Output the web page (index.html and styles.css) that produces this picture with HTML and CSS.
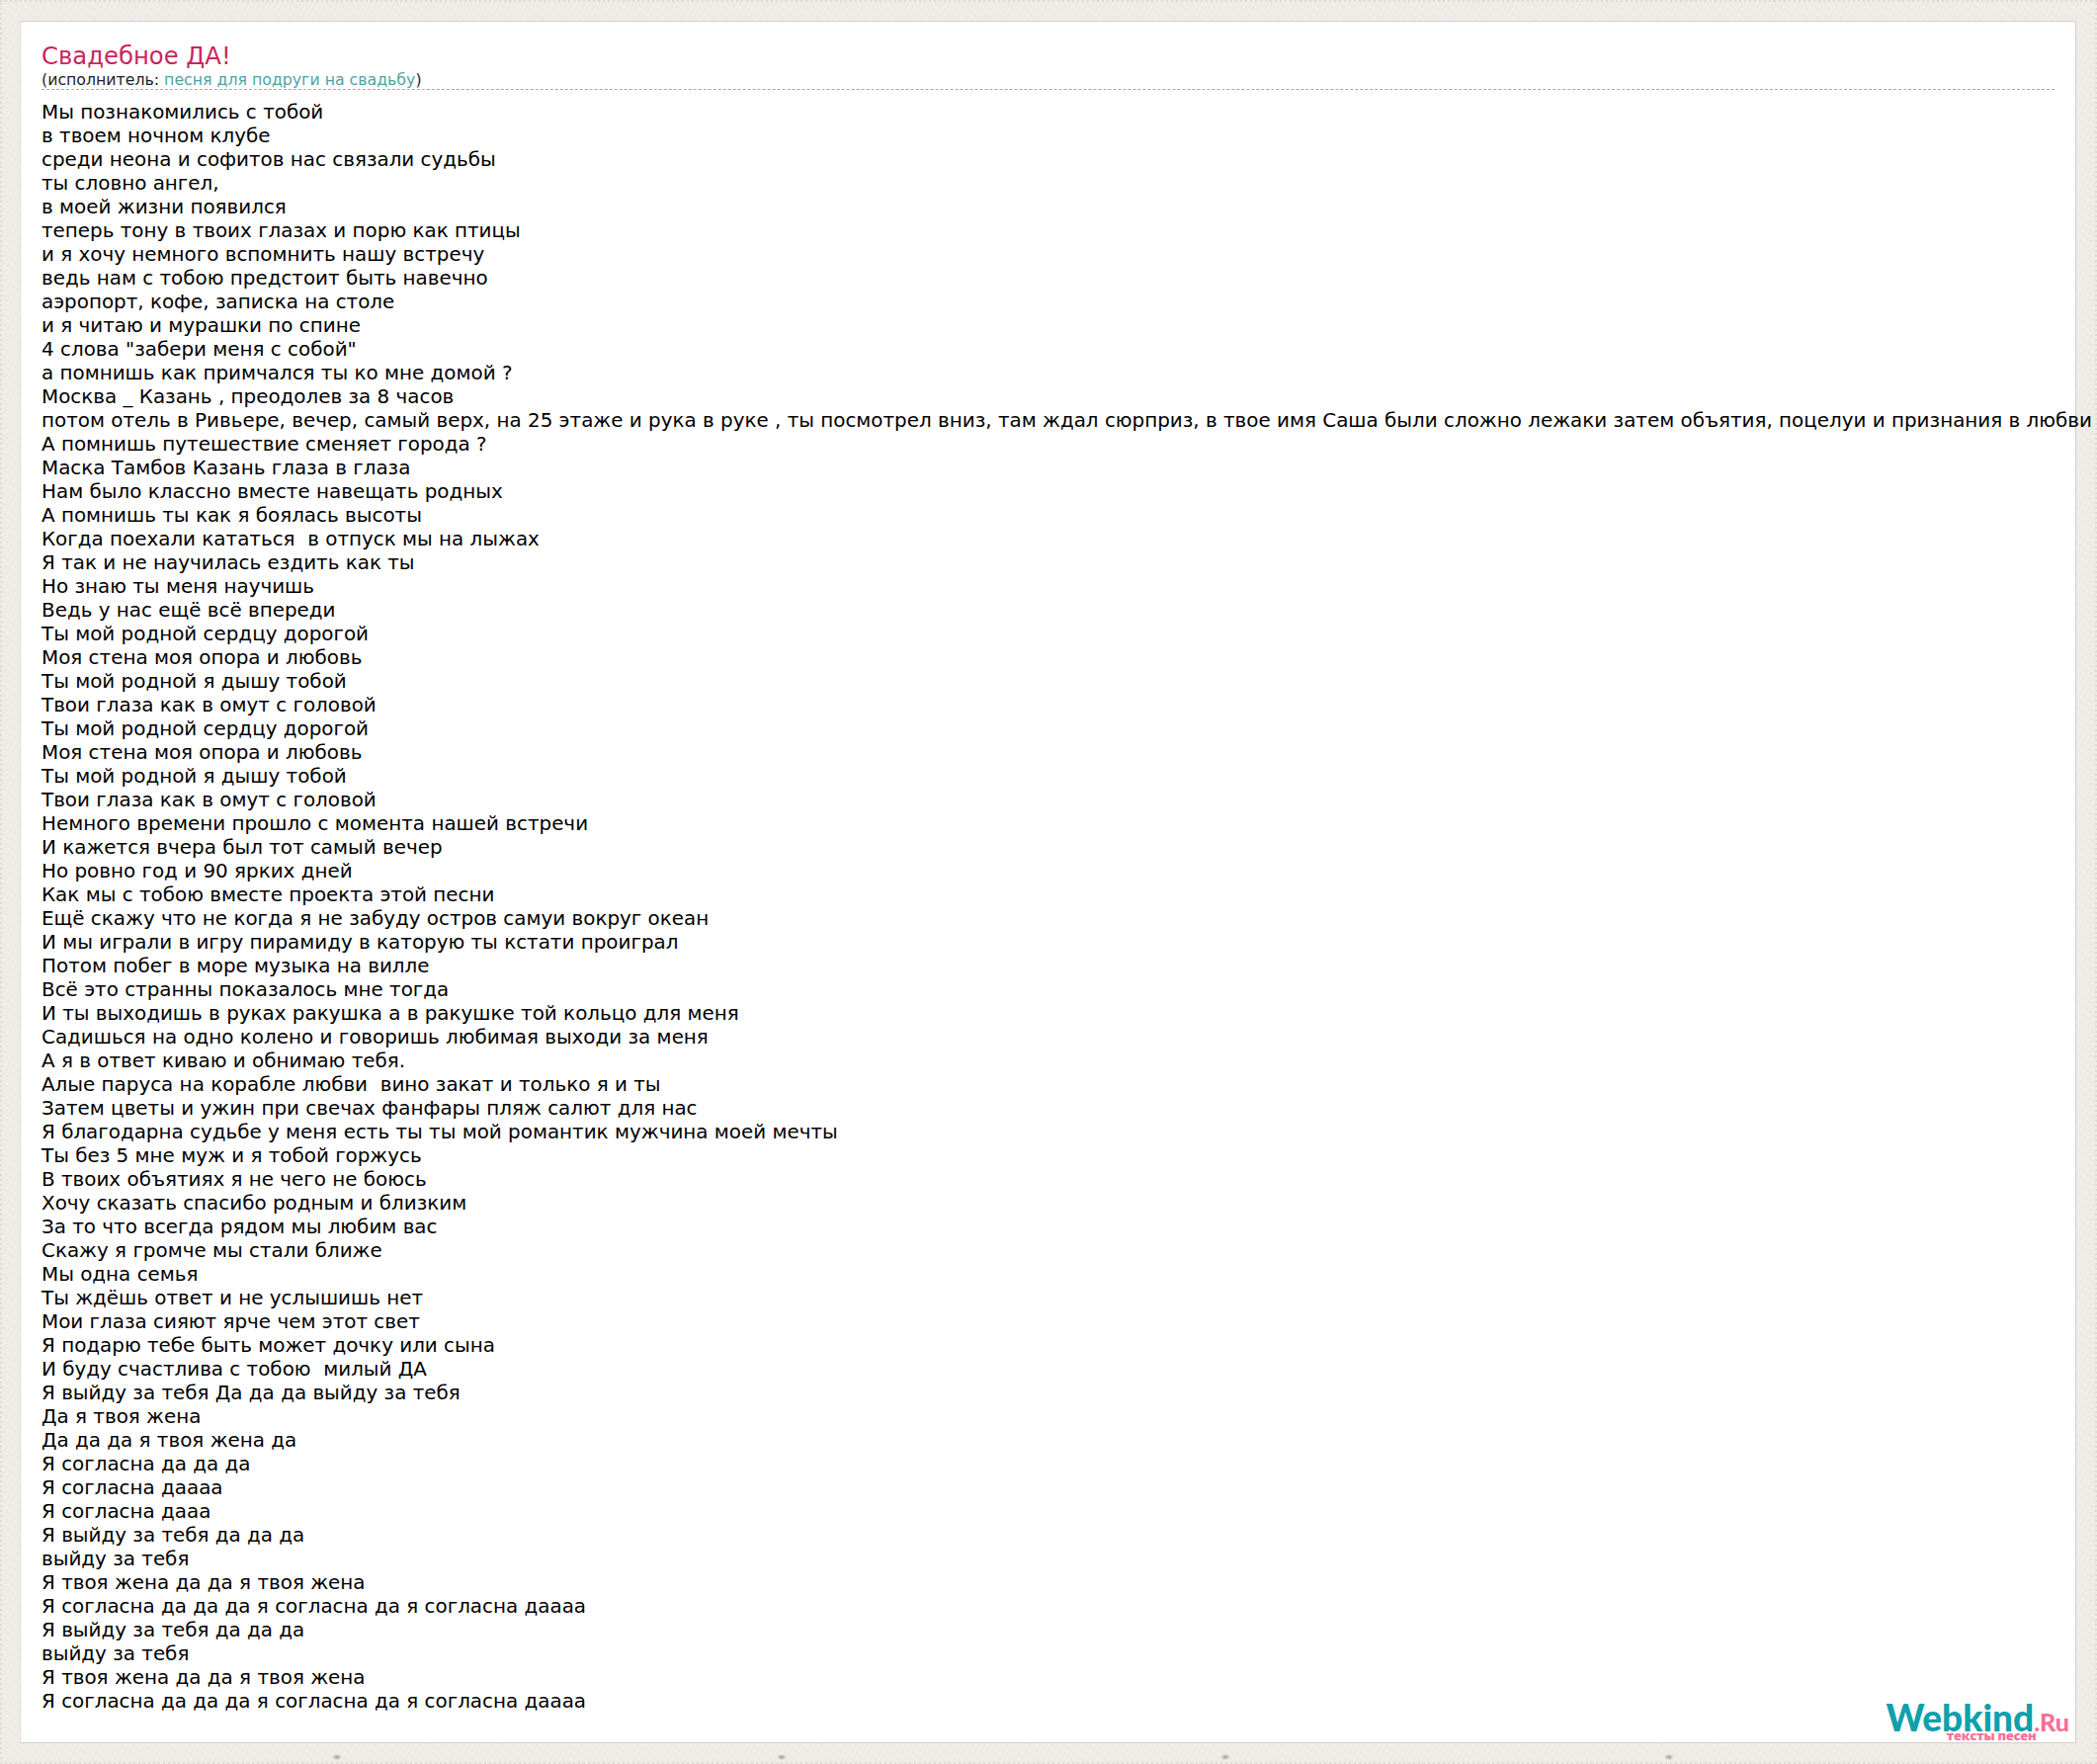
FILE: index.html
```html
<!DOCTYPE html>
<html lang="ru">
<head>
<meta charset="utf-8">
<title>Свадебное ДА!</title>
<link rel="stylesheet" href="styles.css">
</head>
<body>
<main class="card">
<header class="head">
<h1 class="title">Свадебное ДА!</h1>
<p class="artist">(исполнитель: <a class="artist-link" href="#">песня для подруги на свадьбу</a>)</p>
</header>
<div class="lyrics">Мы познакомились с тобой
в твоем ночном клубе
среди неона и софитов нас связали судьбы
ты словно ангел,
в моей жизни появился
теперь тону в твоих глазах и порю как птицы
и я хочу немного вспомнить нашу встречу
ведь нам с тобою предстоит быть навечно
аэропорт, кофе, записка на столе
и я читаю и мурашки по спине
4 слова "забери меня с собой"
а помнишь как примчался ты ко мне домой ?
Москва _ Казань , преодолев за 8 часов
потом отель в Ривьере, вечер, самый верх, на 25 этаже и рука в руке , ты посмотрел вниз, там ждал сюрприз, в твое имя Саша были сложно лежаки затем объятия, поцелуи и признания в любви
А помнишь путешествие сменяет города ?
Маска Тамбов Казань глаза в глаза
Нам было классно вместе навещать родных
А помнишь ты как я боялась высоты
Когда поехали кататься  в отпуск мы на лыжах
Я так и не научилась ездить как ты
Но знаю ты меня научишь
Ведь у нас ещё всё впереди
Ты мой родной сердцу дорогой
Моя стена моя опора и любовь
Ты мой родной я дышу тобой
Твои глаза как в омут с головой
Ты мой родной сердцу дорогой
Моя стена моя опора и любовь
Ты мой родной я дышу тобой
Твои глаза как в омут с головой
Немного времени прошло с момента нашей встречи
И кажется вчера был тот самый вечер
Но ровно год и 90 ярких дней
Как мы с тобою вместе проекта этой песни
Ещё скажу что не когда я не забуду остров самуи вокруг океан
И мы играли в игру пирамиду в каторую ты кстати проиграл
Потом побег в море музыка на вилле
Всё это странны показалось мне тогда
И ты выходишь в руках ракушка а в ракушке той кольцо для меня
Садишься на одно колено и говоришь любимая выходи за меня
А я в ответ киваю и обнимаю тебя.
Алые паруса на корабле любви  вино закат и только я и ты
Затем цветы и ужин при свечах фанфары пляж салют для нас
Я благодарна судьбе у меня есть ты ты мой романтик мужчина моей мечты
Ты без 5 мне муж и я тобой горжусь
В твоих объятиях я не чего не боюсь
Хочу сказать спасибо родным и близким
За то что всегда рядом мы любим вас
Скажу я громче мы стали ближе
Мы одна семья
Ты ждёшь ответ и не услышишь нет
Мои глаза сияют ярче чем этот свет
Я подарю тебе быть может дочку или сына
И буду счастлива с тобою  милый ДА
Я выйду за тебя Да да да выйду за тебя
Да я твоя жена
Да да да я твоя жена да
Я согласна да да да
Я согласна даааа
Я согласна дааа
Я выйду за тебя да да да
выйду за тебя
Я твоя жена да да я твоя жена
Я согласна да да да я согласна да я согласна даааа
Я выйду за тебя да да да
выйду за тебя
Я твоя жена да да я твоя жена
Я согласна да да да я согласна да я согласна даааа</div>
<div class="logo">
<div class="logo-main">Webkind<span class="logo-ru">.Ru</span></div>
<div class="logo-sub">тексты песен</div>
</div>
</main>
</body>
</html>
```
FILE: styles.css
```css
html, body {
  margin: 0;
  padding: 0;
}
body {
  height: 1785px;
  box-sizing: border-box;
  padding: 21px 21px 21px 20px;
  font-family: "DejaVu Sans", sans-serif;
  color: #000;
  overflow: hidden;
  background-color: #efebe7;
  background-image:
    repeating-linear-gradient(90deg, #dedad6 0 2px, transparent 2px 5px),
    repeating-linear-gradient(90deg, #dedad6 0 2px, transparent 2px 5px),
    repeating-linear-gradient(0deg, #dedad6 0 2px, transparent 2px 5px),
    repeating-linear-gradient(0deg, #dedad6 0 2px, transparent 2px 5px),
    radial-gradient(ellipse 5px 3px at 341px 1778px, #9c9894 0, rgba(156, 152, 148, 0) 100%),
    radial-gradient(ellipse 5px 3px at 791px 1778px, #9c9894 0, rgba(156, 152, 148, 0) 100%),
    radial-gradient(ellipse 5px 3px at 1240px 1778px, #9c9894 0, rgba(156, 152, 148, 0) 100%),
    radial-gradient(ellipse 5px 3px at 1689px 1778px, #9c9894 0, rgba(156, 152, 148, 0) 100%),
    repeating-linear-gradient(37deg, rgba(255, 255, 255, 0.07) 0 3px, rgba(0, 0, 0, 0.004) 3px 7px),
    repeating-linear-gradient(118deg, rgba(255, 255, 255, 0.05) 0 2px, rgba(120, 100, 90, 0.006) 2px 5px);
  background-size:
    100% 2px,
    100% 2px,
    2px 100%,
    2px 100%,
    auto, auto, auto, auto, auto, auto;
  background-position:
    0 0,
    0 100%,
    0 0,
    100% 0,
    0 0, 0 0, 0 0, 0 0, 0 0, 0 0;
  background-repeat:
    no-repeat, no-repeat, no-repeat, no-repeat,
    no-repeat, no-repeat, no-repeat, no-repeat,
    repeat, repeat;
}
.card {
  position: relative;
  box-sizing: border-box;
  height: 1743px;
  padding: 20px 21px 0 21px;
  background: #fff;
  border: 1px solid #d2d0cd;
  border-left-color: #e0dedb;
  border-top-color: #d6d4d1;
}
.head {
  border-bottom: 1px dashed #a9a9a9;
}
.title {
  margin: 0;
  font-size: 24.3px;
  font-weight: normal;
  line-height: 30px;
  color: #c9265c;
}
.artist {
  margin: 0;
  font-size: 15.75px;
  line-height: 18px;
  color: #222;
}
.artist-link {
  color: #4fa3a5;
  text-decoration: none;
}
.lyrics {
  margin-top: 11px;
  font-size: 19.9px;
  line-height: 24px;
  white-space: pre;
}
.logo {
  position: absolute;
  right: 6px;
  bottom: 0;
  font-family: "Lato", sans-serif;
  font-weight: 900;
  line-height: 1;
}
.logo-main {
  font-size: 37px;
  color: #0fa0ac;
}
.logo-ru {
  font-size: 25px;
  color: #f76f95;
}
.logo-sub {
  margin: -6px 0 0 61px;
  font-family: "Open Sans", sans-serif;
  font-size: 13px;
  font-weight: 800;
  letter-spacing: -0.3px;
  color: #f76f95;
}
```
